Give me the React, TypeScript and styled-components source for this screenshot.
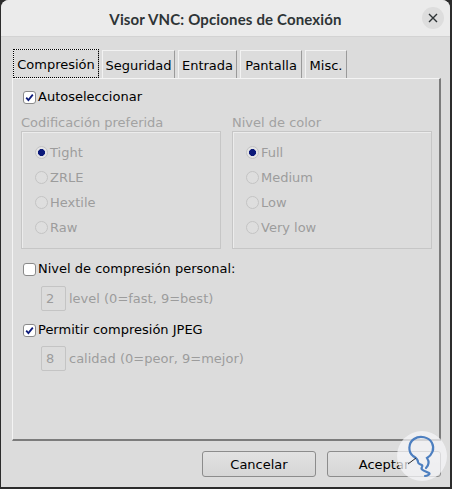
import React from "react";
import styled, { createGlobalStyle } from "styled-components";

const GlobalStyle = createGlobalStyle`
  html, body {
    margin: 0;
    padding: 0;
    background: #2c2c2c;
  }
  body {
    font-family: "DejaVu Sans", "Liberation Sans", sans-serif;
    font-size: 13px;
    color: #000;
  }
`;

const tabs = [
  { label: "Compresión", width: 86 },
  { label: "Seguridad", width: 73 },
  { label: "Entrada", width: 59 },
  { label: "Pantalla", width: 62 },
  { label: "Misc.", width: 42 },
];

function CheckMark() {
  return (
    <svg width="9" height="9" viewBox="0 0 9 9">
      <path d="M1.2 4.6 L3.4 7 L7.8 1.6" fill="none" stroke="#0c1a7a" strokeWidth="1.8" />
    </svg>
  );
}

function App() {
  return (
    <>
      <GlobalStyle />
      <Window>
        <TitleBar>
          <span />
          <Title>Visor VNC: Opciones de Conexión</Title>
          <CloseButton>
            <svg width="10" height="10" viewBox="0 0 10 10">
              <path d="M1 1 L9 9 M9 1 L1 9" stroke="#2e3436" strokeWidth="1.4" />
            </svg>
          </CloseButton>
        </TitleBar>

        <Body>
          <TabStrip>
            {tabs.map((t, i) => (
              <Tab key={t.label} $width={t.width} $active={i === 0}>
                {t.label}
              </Tab>
            ))}
          </TabStrip>

          <Panel>
            <CheckRow>
              <CheckBox $checked>
                <CheckMark />
              </CheckBox>
              <Label>Autoseleccionar</Label>
            </CheckRow>

            <Groups>
              <Group>
                <GroupLabel>Codificación preferida</GroupLabel>
                <GroupBox>
                  {["Tight", "ZRLE", "Hextile", "Raw"].map((r, i) => (
                    <RadioRow key={r}>
                      <Radio $selected={i === 0} />
                      <DimText>{r}</DimText>
                    </RadioRow>
                  ))}
                </GroupBox>
              </Group>
              <Group>
                <GroupLabel>Nivel de color</GroupLabel>
                <GroupBox>
                  {["Full", "Medium", "Low", "Very low"].map((r, i) => (
                    <RadioRow key={r}>
                      <Radio $selected={i === 0} />
                      <DimText>{r}</DimText>
                    </RadioRow>
                  ))}
                </GroupBox>
              </Group>
            </Groups>

            <CheckRow $top={12}>
              <CheckBox />
              <Label>Nivel de compresión personal:</Label>
            </CheckRow>
            <InputRow $top={9}>
              <NumberBox>2</NumberBox>
              <DimText>level (0=fast, 9=best)</DimText>
            </InputRow>

            <CheckRow $top={11}>
              <CheckBox $checked>
                <CheckMark />
              </CheckBox>
              <Label>Permitir compresión JPEG</Label>
            </CheckRow>
            <InputRow $top={8}>
              <NumberBox>8</NumberBox>
              <DimText>calidad (0=peor, 9=mejor)</DimText>
            </InputRow>
          </Panel>

          <ButtonRow>
            <Button>Cancelar</Button>
            <Button>Aceptar</Button>
          </ButtonRow>
        </Body>

        <Watermark>
          <svg width="52" height="52" viewBox="0 0 52 52">
            <circle cx="26" cy="26" r="25" fill="rgba(246,247,249,0.72)" />
            <path
              d="M30 38 C33 35 33 31 31 28 C36 25 39 19 36 13 C33 7 24 5 18 9 C12 13 12 22 17 26 C20 28 22 29 22 32 C22 35 28 34 26 37 C24 40 29 41 33 43 C35 44 31 46 29 46"
              fill="none"
              stroke="#4d7fc0"
              strokeWidth="2.2"
              strokeLinecap="round"
            />
            <path d="M12 34 L20 28" stroke="#2a2a2a" strokeWidth="1" />
          </svg>
        </Watermark>
      </Window>
    </>
  );
}

const Window = styled.div`
  position: relative;
  width: 449px;
  height: 487px;
  margin-left: 1px;
  background: #dcdcdc;
  border-radius: 8px 8px 0 0;
  overflow: hidden;
  display: flex;
  flex-direction: column;
`;

const TitleBar = styled.div`
  height: 36px;
  flex: none;
  background: #ebebeb;
  border-bottom: 1px solid #d3d3d3;
  display: grid;
  grid-template-columns: 40px 1fr 40px;
  align-items: center;
`;

const Title = styled.div`
  text-align: center;
  font-family: "Lato", "DejaVu Sans", sans-serif;
  font-weight: 700;
  font-size: 15px;
  letter-spacing: 0.15px;
  color: #2e3436;
  padding-top: 1px;
`;

const CloseButton = styled.div`
  width: 22px;
  height: 22px;
  border-radius: 50%;
  background: #dddddd;
  display: flex;
  align-items: center;
  justify-content: center;
  margin-left: 12px;
`;

const Body = styled.div`
  flex: 1;
  display: flex;
  flex-direction: column;
  padding: 12px 9px 0 11px;
`;

const TabStrip = styled.div`
  display: flex;
  align-items: flex-end;
  gap: 3px;
  height: 29px;
  padding-left: 1px;
`;

const Tab = styled.div<{ $width: number; $active?: boolean }>`
  width: ${(p) => p.$width}px;
  height: ${(p) => (p.$active ? 29 : 28)}px;
  box-sizing: border-box;
  display: flex;
  align-items: center;
  justify-content: center;
  background: #dcdcdc;
  border-top: 1px solid #f2f2f2;
  border-left: 1px solid #f2f2f2;
  border-right: 1px solid #9a9a9a;
  outline: ${(p) => (p.$active ? "1px dotted #000" : "none")};
  outline-offset: -1px;
  padding-top: 1px;
`;

const Panel = styled.div`
  height: 363px;
  box-sizing: border-box;
  border-top: 1px solid #f4f4f4;
  border-left: 1px solid #f4f4f4;
  border-right: 2px solid #7c7c7c;
  border-bottom: 2px solid #7c7c7c;
  padding: 10px 0 0 8px;
  display: flex;
  flex-direction: column;
`;

const CheckRow = styled.div<{ $top?: number }>`
  display: flex;
  align-items: center;
  height: 16px;
  margin-top: ${(p) => p.$top ?? 0}px;
  padding-left: 2px;
  gap: 2px;
`;

const CheckBox = styled.span<{ $checked?: boolean }>`
  width: 13px;
  height: 13px;
  box-sizing: border-box;
  border: 1px solid #8a8a8a;
  border-radius: 3px;
  background: #fff;
  display: flex;
  align-items: center;
  justify-content: center;
`;

const Label = styled.span`
  color: #000;
  line-height: 16px;
`;

const DimText = styled.span`
  color: #9c9c9c;
  line-height: 16px;
`;

const Groups = styled.div`
  display: flex;
  gap: 11px;
  margin-top: 10px;
`;

const Group = styled.div`
  width: 200px;
  display: flex;
  flex-direction: column;
`;

const GroupLabel = styled.div`
  color: #a2a2a2;
  height: 16px;
  line-height: 16px;
`;

const GroupBox = styled.div`
  height: 118px;
  box-sizing: border-box;
  border: 1px solid #c6c6c6;
  box-shadow: inset 1px 1px 0 #ececec;
  padding: 8px 0 0 13px;
`;

const RadioRow = styled.div`
  display: flex;
  align-items: center;
  height: 25px;
  gap: 2px;
`;

const Radio = styled.span<{ $selected?: boolean }>`
  width: 13px;
  height: 13px;
  box-sizing: border-box;
  border-radius: 50%;
  border: 1px solid #c4c4c4;
  background: ${(p) =>
    p.$selected ? "radial-gradient(circle, #0c1a7a 0 3.2px, #e4e4e4 3.8px)" : "#dedede"};
`;

const InputRow = styled.div<{ $top?: number }>`
  display: flex;
  align-items: center;
  gap: 3px;
  margin-top: ${(p) => p.$top ?? 0}px;
  padding-left: 20px;
`;

const NumberBox = styled.span`
  width: 25px;
  height: 25px;
  box-sizing: border-box;
  border: 1px solid #c4c4c4;
  border-radius: 2px;
  color: #9c9c9c;
  padding-left: 4px;
  display: flex;
  align-items: center;
`;

const ButtonRow = styled.div`
  display: flex;
  justify-content: flex-end;
  gap: 11px;
  margin-top: 10px;
`;

const Button = styled.div`
  width: 114px;
  height: 26px;
  box-sizing: border-box;
  border: 1px solid #8c8c8c;
  border-radius: 3px;
  background: linear-gradient(#e2e2e2, #d6d6d6);
  display: flex;
  align-items: center;
  justify-content: center;
  color: #000;
`;

const Watermark = styled.div`
  position: absolute;
  left: 395px;
  top: 430px;
  width: 52px;
  height: 52px;
`;

export default App;
